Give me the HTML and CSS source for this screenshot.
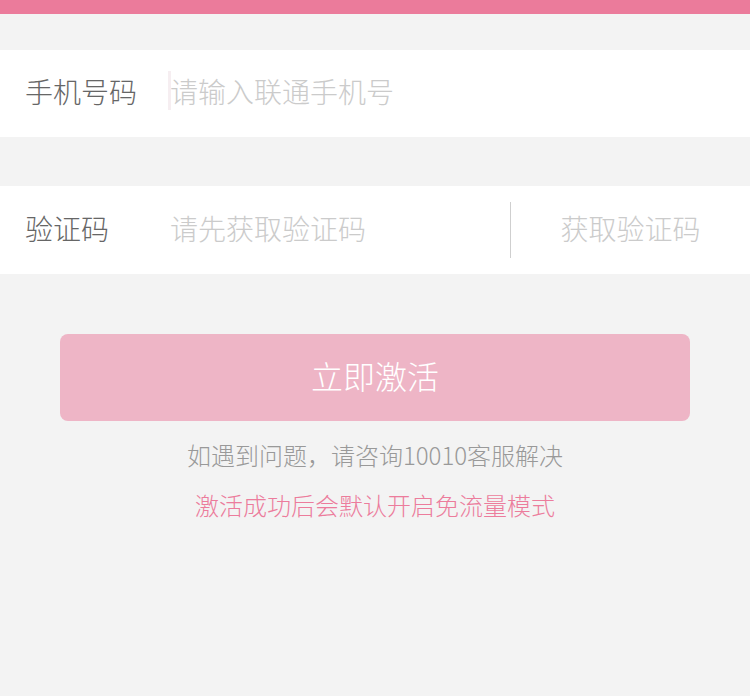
FILE: index.html
```html
<!DOCTYPE html>
<html lang="zh-CN">
<head>
    <meta charset="UTF-8">
    <meta name="viewport" content="width=device-width, initial-scale=1.0">
    <title>激活免流量</title>
    <link rel="stylesheet" href="styles.css">
</head>
<body>
    <div class="topbar"></div>

    <div class="form">
        <div class="row row-phone">
            <span class="label">手机号码</span>
            <span class="field"><span class="caret"></span>请输入联通手机号</span>
        </div>

        <div class="row row-code">
            <span class="label">验证码</span>
            <span class="field">请先获取验证码</span>
            <span class="divider"></span>
            <span class="get-code">获取验证码</span>
        </div>
    </div>

    <div class="actions">
        <button class="activate-btn">立即激活</button>
        <p class="tip">如遇到问题，请咨询10010客服解决</p>
        <p class="tip tip-pink">激活成功后会默认开启免流量模式</p>
    </div>
</body>
</html>
```

FILE: styles.css
```css
body {
    margin: 0;
    padding: 0;
    background-color: #f3f3f3;
    font-family: "Noto Sans CJK SC", "Noto Sans", sans-serif;
    font-weight: 300;
    height: 696px;
    overflow: hidden;
}
.topbar {
    height: 14px;
    background-color: #eb7b9b;
}
.form {
    padding-top: 36px;
}
.row {
    display: flex;
    align-items: center;
    box-sizing: border-box;
    background-color: #fff;
    height: 87px;
    padding-left: 25px;
    padding-bottom: 5px;
}
.row-code {
    margin-top: 49px;
    height: 88px;
}
.label {
    width: 145px;
    font-size: 28px;
    color: #666;
}
.field {
    position: relative;
    flex: 1;
    font-size: 28px;
    color: #cbcbcb;
}
.caret {
    position: absolute;
    left: -2px;
    top: 0;
    width: 3px;
    height: 39px;
    background-color: #f6eef1;
}
.divider {
    width: 1px;
    height: 56px;
    margin-top: 5px;
    background-color: #cfcfcf;
}
.get-code {
    width: 239px;
    text-align: center;
    font-size: 28px;
    color: #cbcbcb;
}
.actions {
    padding: 60px 60px 0;
    text-align: center;
}
.activate-btn {
    display: block;
    width: 100%;
    height: 87px;
    padding-bottom: 6px;
    border: none;
    border-radius: 8px;
    background-color: #eeb5c6;
    color: #fff;
    font-family: inherit;
    font-weight: 300;
    font-size: 32px;
}
.tip {
    margin: 14px 0 0;
    font-size: 24px;
    line-height: 40px;
    color: #999;
}
.tip-pink {
    margin-top: 10px;
    color: #ec7c9c;
}
```
